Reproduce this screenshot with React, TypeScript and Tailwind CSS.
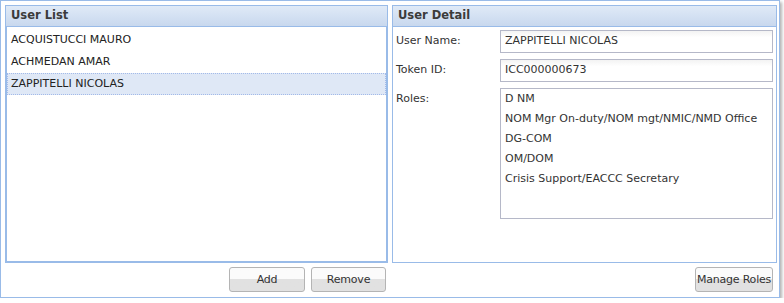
const users = ['ACQUISTUCCI MAURO', 'ACHMEDAN AMAR', 'ZAPPITELLI NICOLAS']
const roles = [
  'D NM',
  'NOM Mgr On-duty/NOM mgt/NMIC/NMD Office',
  'DG-COM',
  'OM/DOM',
  'Crisis Support/EACCC Secretary',
]

const font = { fontFamily: '"DejaVu Sans", Verdana, sans-serif' }

function PanelHeader({ title }: { title: string }) {
  return (
    <div className="h-[21px] flex items-center pl-[5px] border-b border-[#99bbe8] bg-gradient-to-b from-[#e0eaf7] to-[#c8d8ee] text-[11.5px] font-bold text-[#3b3b3b]">
      {title}
    </div>
  )
}

function Button({ label, width }: { label: string; width: string }) {
  return (
    <button
      className={`${width} h-[25px] rounded-[3px] border border-[#b4b4b4] bg-gradient-to-b from-[#fbfbfb] from-50% to-[#e1e1e1] to-50% text-[11px] text-[#333] leading-none whitespace-nowrap px-0 tracking-[-0.2px]`}
    >
      {label}
    </button>
  )
}

export default function App() {
  return (
    <div style={font} className="w-[780px] h-[298px] bg-white border border-[#99bbe8] shadow-[2px_2px_3px_rgba(0,0,0,0.3)] pt-[4px] pl-[4px] pr-[2px] flex flex-col">
      <div className="flex gap-[4px] h-[258px]">
        <div className="w-[383px] border border-[#99bbe8] flex flex-col">
          <PanelHeader title="User List" />
          <div className="flex-1 border-x border-b border-[#99bbe8] pt-[2px] text-[11px] text-[#222]">
            {users.map((u, i) => (
              <div
                key={u}
                className={`h-[22px] flex items-center pl-[3px] border border-dotted ${
                  i === 2 ? 'bg-[#dfe8f6] border-[#a3bae9]' : 'border-transparent'
                }`}
              >
                {u}
              </div>
            ))}
          </div>
        </div>
        <div className="w-[385px] border border-[#99bbe8] flex flex-col">
          <PanelHeader title="User Detail" />
          <div className="flex-1 pt-[3px] pl-[3px] pr-[3px] text-[11px] text-[#333] flex flex-col gap-[6px]">
            <div className="flex">
              <div className="w-[104px] h-[23px] flex items-center">User Name:</div>
              <div className="flex-1 h-[23px] border border-[#b5b8c8] bg-gradient-to-b from-[#f3f3f3] to-white to-30% flex items-center pl-[4px]">
                ZAPPITELLI NICOLAS
              </div>
            </div>
            <div className="flex">
              <div className="w-[104px] h-[23px] flex items-center">Token ID:</div>
              <div className="flex-1 h-[23px] border border-[#b5b8c8] bg-gradient-to-b from-[#f3f3f3] to-white to-30% flex items-center pl-[4px]">
                ICC000000673
              </div>
            </div>
            <div className="flex">
              <div className="w-[104px] h-[23px] flex items-center">Roles:</div>
              <div className="flex-1 h-[131px] border border-[#b5b8c8] pl-[4px] leading-[20px]">
                {roles.map((r) => (
                  <div key={r}>{r}</div>
                ))}
              </div>
            </div>
          </div>
        </div>
      </div>
      <div className="flex gap-[4px] pt-[4px]">
        <div className="w-[383px] flex justify-end gap-[6px] pr-[2px]">
          <Button label="Add" width="w-[76px]" />
          <Button label="Remove" width="w-[75px]" />
        </div>
        <div className="w-[385px] flex justify-end pr-[4px]">
          <Button label="Manage Roles" width="w-[78px]" />
        </div>
      </div>
    </div>
  )
}
